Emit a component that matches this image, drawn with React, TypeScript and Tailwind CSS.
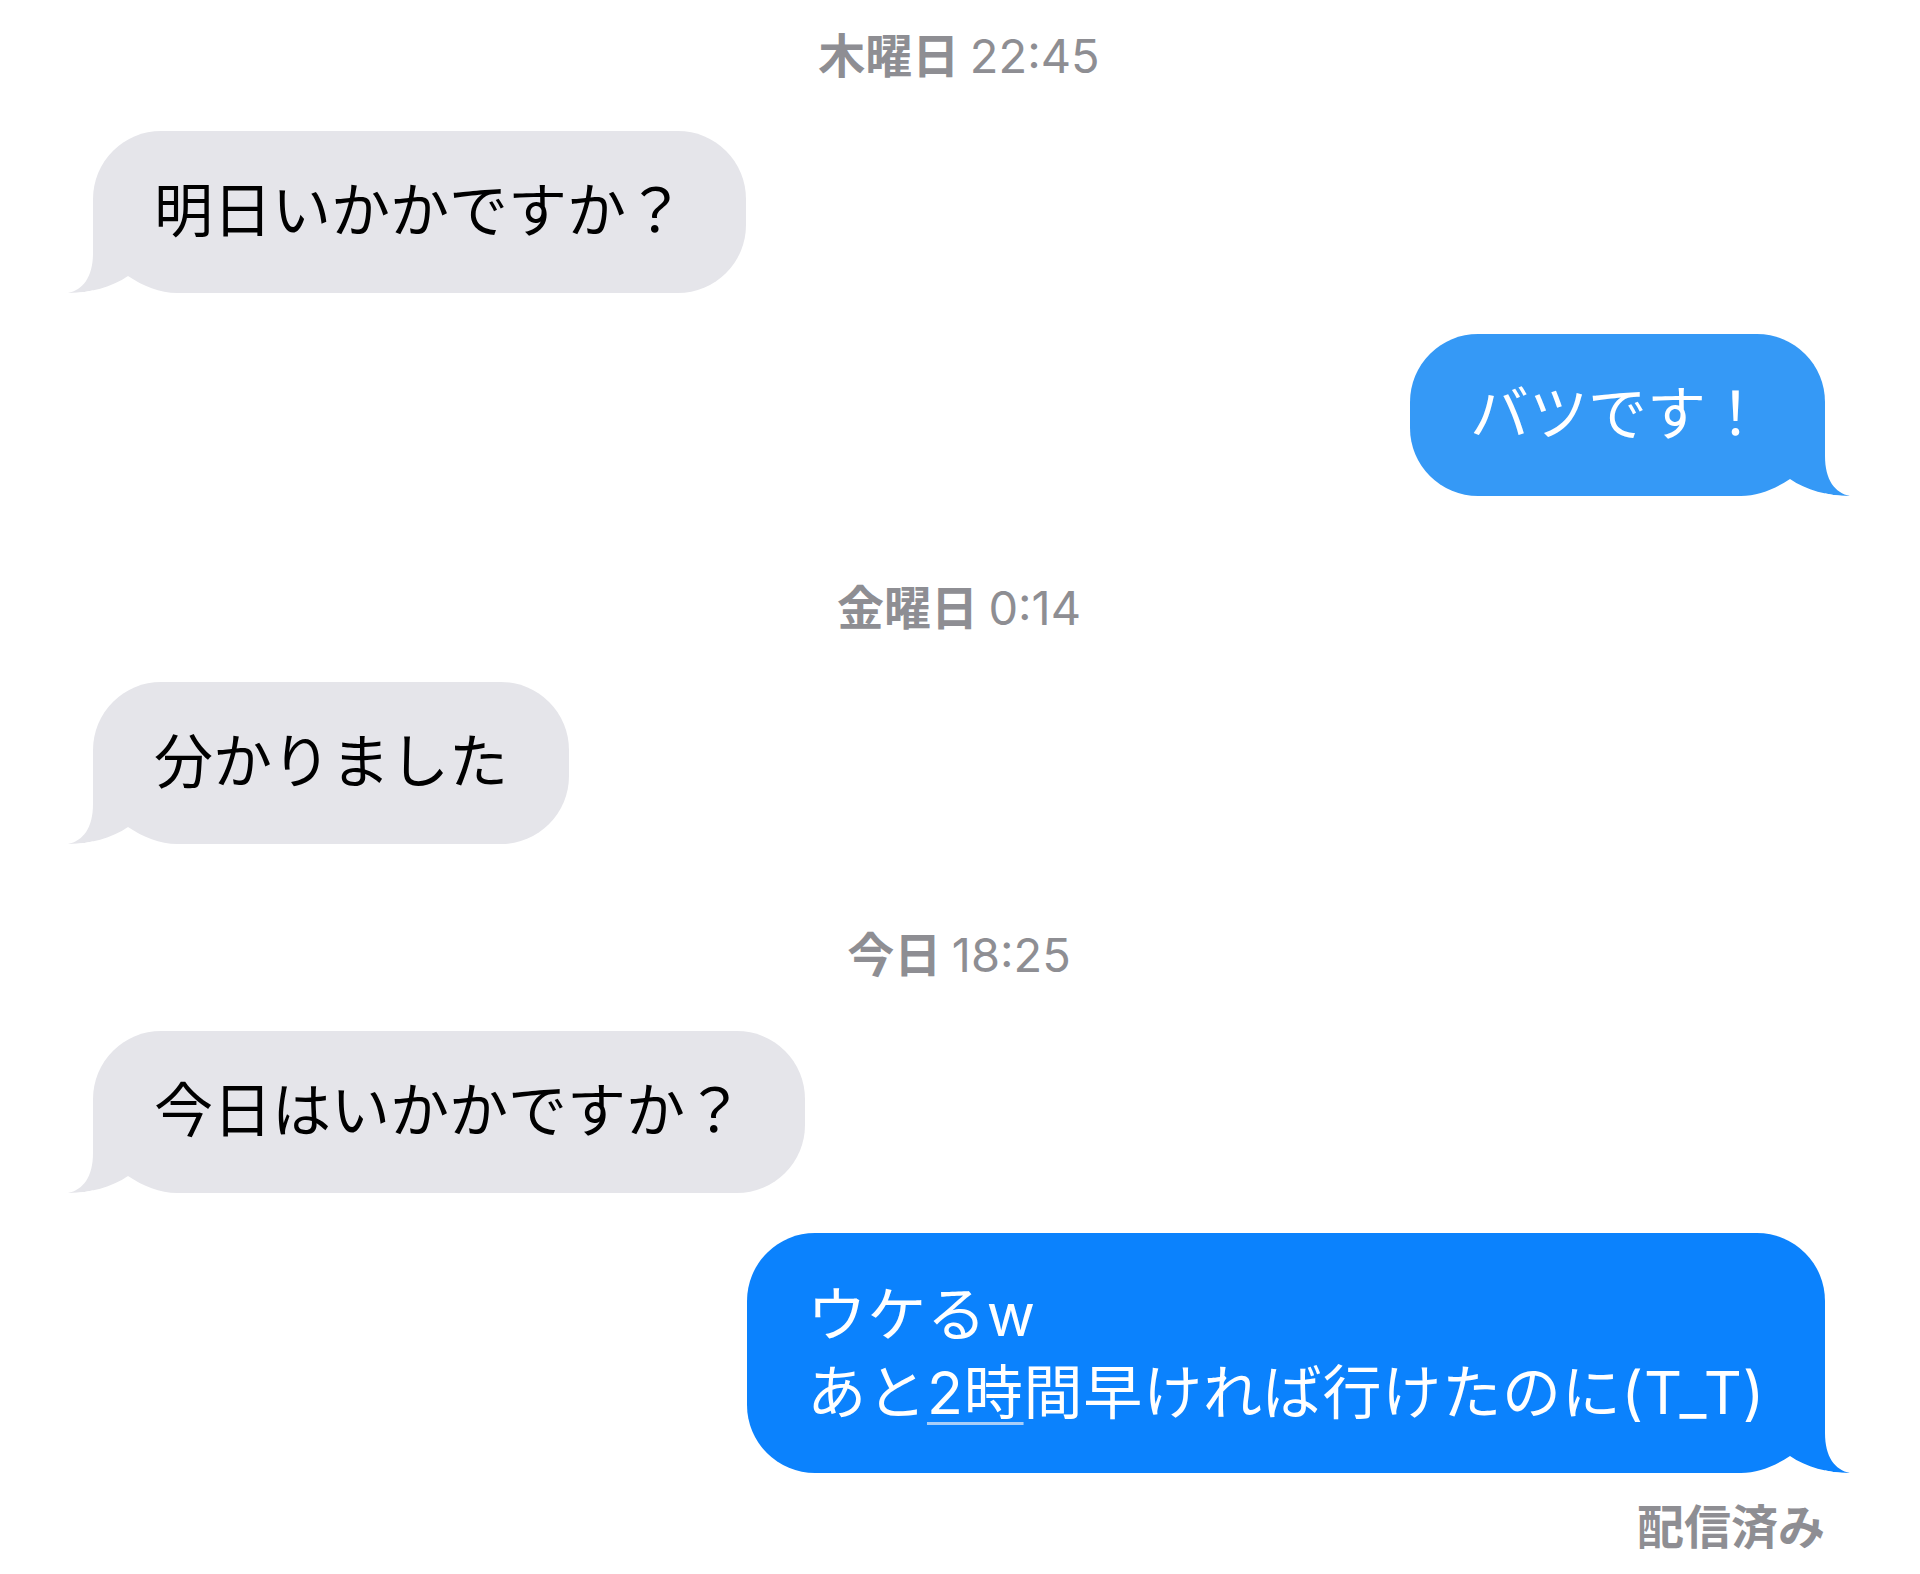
import React from 'react';

const GRAY = '#e5e5ea';

// Bubble tail: the hook at the bottom corner plus the white notch cut under it
const Tail = ({ fill, side }: { fill: string; side: 'left' | 'right' }) => (
  <svg
    width="120"
    height="60"
    viewBox="0 0 120 60"
    className={
      side === 'left'
        ? 'absolute -left-[25px] bottom-0'
        : 'absolute -right-[25px] bottom-0 -scale-x-100'
    }
  >
    <path d="M25 0 L25 20 C25 44 15 57 0 60 C22 60 44 54 60 43 C75 53 92 60 109 60 L120 60 L120 0 Z" fill={fill} />
    <path d="M0 60 C22 60 44 54 60 43 C75 53 92 60 109 60 Z" fill="#ffffff" />
  </svg>
);

const Stamp = ({ day, time, className }: { day: string; time: string; className?: string }) => (
  <div className={`text-center text-[47px] leading-[56px] text-[#8e8e93] ${className ?? ''}`}>
    <span className="font-bold">{day}</span>{' '}
    <span className="font-normal font-['Inter','Noto_Sans_CJK_JP',sans-serif]">{time}</span>
  </div>
);

const Received = ({ children, className }: { children: React.ReactNode; className?: string }) => (
  <div
    className={`relative self-start rounded-[68px] rounded-bl-none px-[61px] pt-[37px] pb-[47px] text-[59px] leading-[78px] text-black bg-[#e5e5ea] ${className ?? ''}`}
  >
    <Tail fill={GRAY} side="left" />
    <span className="relative z-10">{children}</span>
  </div>
);

const Sent = ({
  children,
  color,
  className,
}: {
  children: React.ReactNode;
  color: string;
  className?: string;
}) => (
  <div
    className={`relative self-end rounded-[68px] rounded-br-none px-[60px] text-[59px] leading-[78px] text-white ${className ?? 'pt-[37px] pb-[47px]'}`}
    style={{ backgroundColor: color }}
  >
    <Tail fill={color} side="right" />
    <span className="relative z-10">{children}</span>
  </div>
);

export default function App() {
  return (
    <div className="w-[1920px] h-[1574px] overflow-hidden bg-white flex flex-col pl-[93px] pr-[95px] font-['Noto_Sans_CJK_JP','Noto_Sans',sans-serif]">
      <Stamp className="mt-[25px]" day="木曜日" time="22:45" />
      <Received className="mt-[47px]">明日いかかですか？</Received>
      <Sent className="mt-[41px] pt-[37px] pb-[47px]" color="#3599f6">バツです！</Sent>

      <Stamp className="mt-[81px]" day="金曜日" time="0:14" />
      <Received className="mt-[46px]">分かりました</Received>

      <Stamp className="mt-[80px]" day="今日" time="18:25" />
      <Received className="mt-[48px]">今日はいかかですか？</Received>
      <Sent
        className="mt-[40px] pt-[43px] pb-[41px] tracking-[0.8px] font-['Inter','Noto_Sans_CJK_JP',sans-serif]"
        color="#0b82fd"
      >
        ウケるw
        <br />
        あと
        <span className="underline decoration-[#a8cef8] decoration-[3px] underline-offset-[8px]">2時</span>
        間早ければ行けたのに(T_T)
      </Sent>

      <div className="self-end mt-[23px] text-[47px] leading-[56px] font-bold text-[#8e8e93]">配信済み</div>
    </div>
  );
}
